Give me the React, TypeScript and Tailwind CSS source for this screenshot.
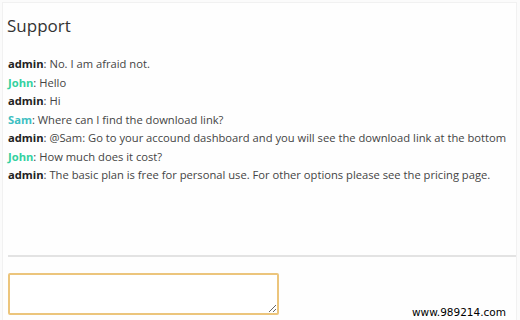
import React from "react";

// ---------- Data ----------
type Message = { user: string; text: string };

const MESSAGES: Message[] = [
  { user: "admin", text: "No. I am afraid not." },
  { user: "John", text: "Hello" },
  { user: "admin", text: "Hi" },
  { user: "Sam", text: "Where can I find the download link?" },
  {
    user: "admin",
    text: "@Sam: Go to your accound dashboard and you will see the download link at the bottom",
  },
  { user: "John", text: "How much does it cost?" },
  {
    user: "admin",
    text: "The basic plan is free for personal use. For other options please see the pricing page.",
  },
];

const nameColor: Record<string, string> = {
  admin: "text-[#222222]",
  John: "text-[#33d1a0]",
  Sam: "text-[#3dbfc2]",
};

// ---------- Component ----------
export default function App() {
  return (
    <div className="relative h-[320px] w-[520px] overflow-hidden bg-[#fbfbfb] font-['Open_Sans',sans-serif]">
      <div className="ml-[2px] mt-[2px] flex h-[318px] w-[515px] flex-col border-l border-r border-t border-[#f1f1f1] bg-[#fefefe]">
        <h2 className="pl-[4px] pt-[11px] text-[17px] leading-[24px] text-[#333333]">Support</h2>

        <ul className="mt-[17px] pl-[5px] text-[11.2px] leading-[18.5px] text-[#444444]">
          {MESSAGES.map((m, i) => (
            <li key={i} className="whitespace-nowrap">
              <span className={`font-bold ${nameColor[m.user]}`}>{m.user}</span>: {m.text}
            </li>
          ))}
        </ul>

        <div className="mt-auto ml-[5px] h-[2px] bg-[#e3e3e3]" />

        <div className="pl-[5px] pt-[16px] pb-[5px]">
          <textarea className="block h-[42px] w-[271px] rounded-[2px] border-2 border-[#ecc57c] bg-white outline-none" />
        </div>
      </div>

      <span className="absolute bottom-[3px] right-[14px] font-['DejaVu_Sans',sans-serif] text-[10.5px] leading-none text-black">
        www.989214.com
      </span>
    </div>
  );
}
